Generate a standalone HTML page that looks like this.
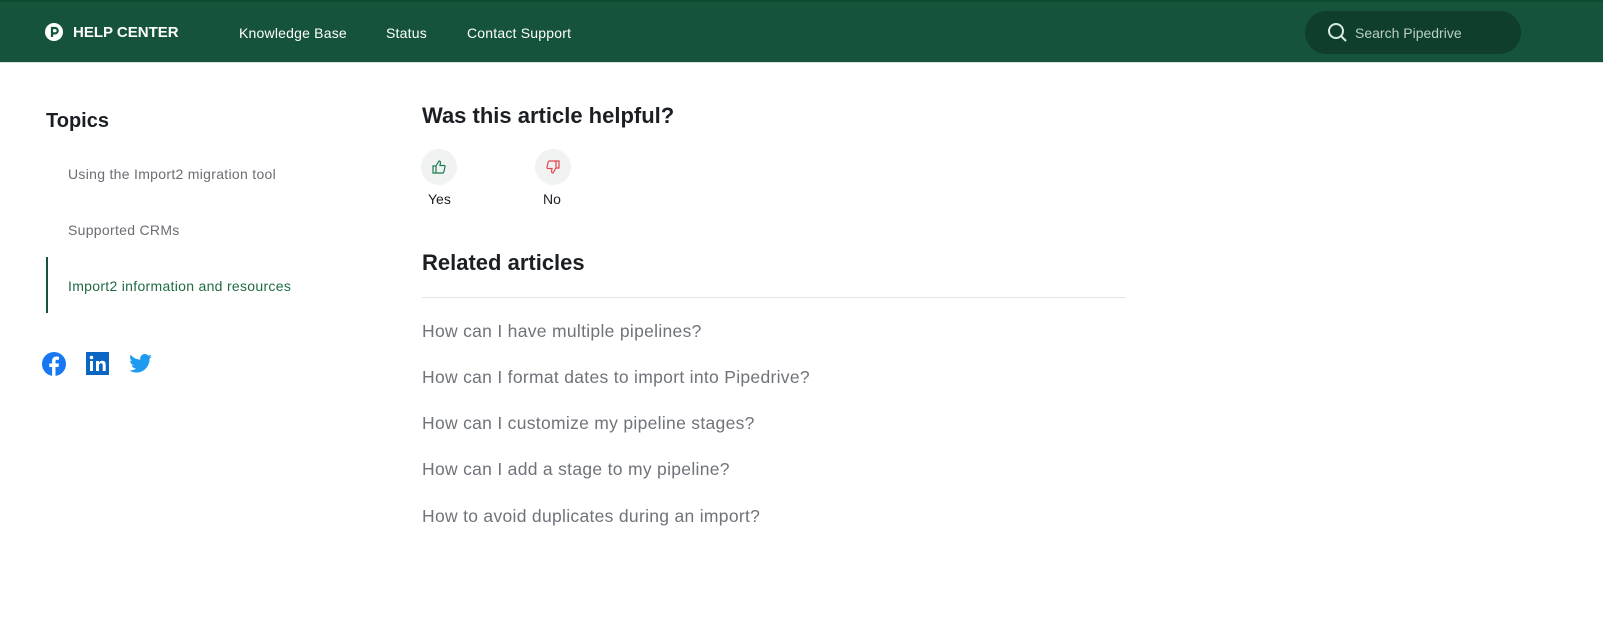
<!DOCTYPE html>
<html><head><meta charset="utf-8"><style>
*{margin:0;padding:0;box-sizing:border-box}
body{width:1603px;height:620px;background:#fff;font-family:"Liberation Sans",sans-serif;position:relative;overflow:hidden;color:#1b1f24}
.hdr{position:absolute;left:0;top:0;width:1603px;height:63px;background:#15543a;border-top:2px solid #0f4a31;border-bottom:1px solid #d9e4df}
.a{position:absolute;white-space:nowrap}
.nav{color:#fff;font-size:14px;top:25px;letter-spacing:0.2px}
.search{position:absolute;left:1305px;top:11px;width:216px;height:43px;border-radius:22px;background:#0f3f2c}
.topic{color:#6a6d73;font-size:14px;left:68px;letter-spacing:0.3px}
.rel{color:#6f737a;font-size:17.5px;left:422px;letter-spacing:0.3px}
.circ{position:absolute;width:36px;height:36px;border-radius:50%;background:#f1f3f3}
</style></head><body>
<div class="hdr"></div>
<svg class="a" style="left:45px;top:23px" width="18" height="18" viewBox="0 0 18 18"><circle cx="9" cy="9" r="9" fill="#fff"/><path d="M7 14V5h3a2.7 2.7 0 0 1 0 5.4H7" fill="none" stroke="#15543a" stroke-width="2.2"/></svg>
<div class="a" style="left:73px;top:24px;color:#fff;font-weight:bold;font-size:15px">HELP CENTER</div>
<div class="a nav" style="left:239px">Knowledge Base</div>
<div class="a nav" style="left:386px">Status</div>
<div class="a nav" style="left:467px">Contact Support</div>
<div class="search"></div>
<svg class="a" style="left:1327px;top:22px" width="21" height="21" viewBox="0 0 21 21"><circle cx="9" cy="9" r="7" fill="none" stroke="#d8ebe1" stroke-width="2"/><path d="M14 14l5 5" stroke="#d8ebe1" stroke-width="2"/></svg>
<div class="a" style="left:1355px;top:25px;color:#b8cfc3;font-size:14px">Search Pipedrive</div>

<div class="a" style="left:46px;top:110px;font-size:20px;font-weight:bold">Topics</div>
<div class="a topic" style="top:166px">Using the Import2 migration tool</div>
<div class="a topic" style="top:222px">Supported CRMs</div>
<div class="a" style="left:46px;top:257px;width:2px;height:56px;background:#15543a"></div>
<div class="a topic" style="top:278px;color:#1f6b45">Import2 information and resources</div>

<svg class="a" style="left:42px;top:352px" width="24" height="24" viewBox="0 0 24 24"><circle cx="12" cy="12" r="12" fill="#1877f2"/><path d="M13.5 24v-9h3l.5-3.5h-3.5V9.5c0-1 .4-1.7 1.8-1.7H17V4.7c-.4 0-1.4-.2-2.6-.2-2.6 0-4.300 1.6-4.3 4.4v2.6H7.3V15h2.8v9z" fill="#fff"/></svg>
<svg class="a" style="left:86px;top:352px" width="23" height="23" viewBox="0 0 23 23"><rect width="23" height="23" fill="#0a66c2"/><rect x="4" y="9" width="3" height="10" fill="#fff"/><circle cx="5.5" cy="5.5" r="1.8" fill="#fff"/><path d="M10 9h3v1.5c.6-1 1.7-1.8 3.3-1.8 2.6 0 3.4 1.6 3.4 4.2V19h-3v-5.5c0-1.3-.3-2.3-1.6-2.3S13 12.2 13 13.5V19h-3z" fill="#fff"/></svg>
<svg class="a" style="left:129px;top:354px" width="23" height="19" viewBox="0 0 24 20"><path d="M24 2.4a10 10 0 0 1-2.8.8A5 5 0 0 0 23.3.4a10 10 0 0 1-3.1 1.2A4.9 4.9 0 0 0 11.8 6 14 14 0 0 1 1.7.9a4.9 4.9 0 0 0 1.5 6.6A4.9 4.9 0 0 1 1 6.9a4.9 4.9 0 0 0 3.9 4.9 5 5 0 0 1-2.2.1 4.9 4.9 0 0 0 4.6 3.4A9.9 9.9 0 0 1 0 17.3 14 14 0 0 0 7.5 19.5c9.1 0 14-7.5 14-14v-.6A10 10 0 0 0 24 2.4z" fill="#1d9bf0"/></svg>

<div class="a" style="left:422px;top:103px;font-size:22px;font-weight:bold">Was this article helpful?</div>
<div class="circ" style="left:421px;top:149px"></div>
<svg class="a" style="left:432px;top:160px" width="14" height="14" viewBox="0 0 14 14"><path d="M1 6h3v7H1zM4 6l3-5c1.2 0 1.6.8 1.4 2L8 5.5h4c.8 0 1.2.6 1 1.3l-1.2 5.2c-.2.6-.6 1-1.2 1H4" fill="none" stroke="#1f7a4d" stroke-width="1.2"/></svg>
<div class="a" style="left:428px;top:191px;font-size:14px">Yes</div>
<div class="circ" style="left:535px;top:149px"></div>
<svg class="a" style="left:546px;top:160px" width="14" height="14" viewBox="0 0 14 14"><path d="M13 8h-3V1h3zM10 8l-3 5c-1.2 0-1.6-.8-1.4-2L6 8.5H2c-.8 0-1.2-.6-1-1.3L2.2 2c.2-.6.6-1 1.2-1H10" fill="none" stroke="#e0454d" stroke-width="1.2"/></svg>
<div class="a" style="left:543px;top:191px;font-size:14px">No</div>

<div class="a" style="left:422px;top:250px;font-size:22px;font-weight:bold">Related articles</div>
<div class="a" style="left:422px;top:297px;width:704px;height:1px;background:#e3e5e6"></div>
<div class="a rel" style="top:321px">How can I have multiple pipelines?</div>
<div class="a rel" style="top:367px">How can I format dates to import into Pipedrive?</div>
<div class="a rel" style="top:413px">How can I customize my pipeline stages?</div>
<div class="a rel" style="top:459px">How can I add a stage to my pipeline?</div>
<div class="a rel" style="top:506px">How to avoid duplicates during an import?</div>
</body></html>
